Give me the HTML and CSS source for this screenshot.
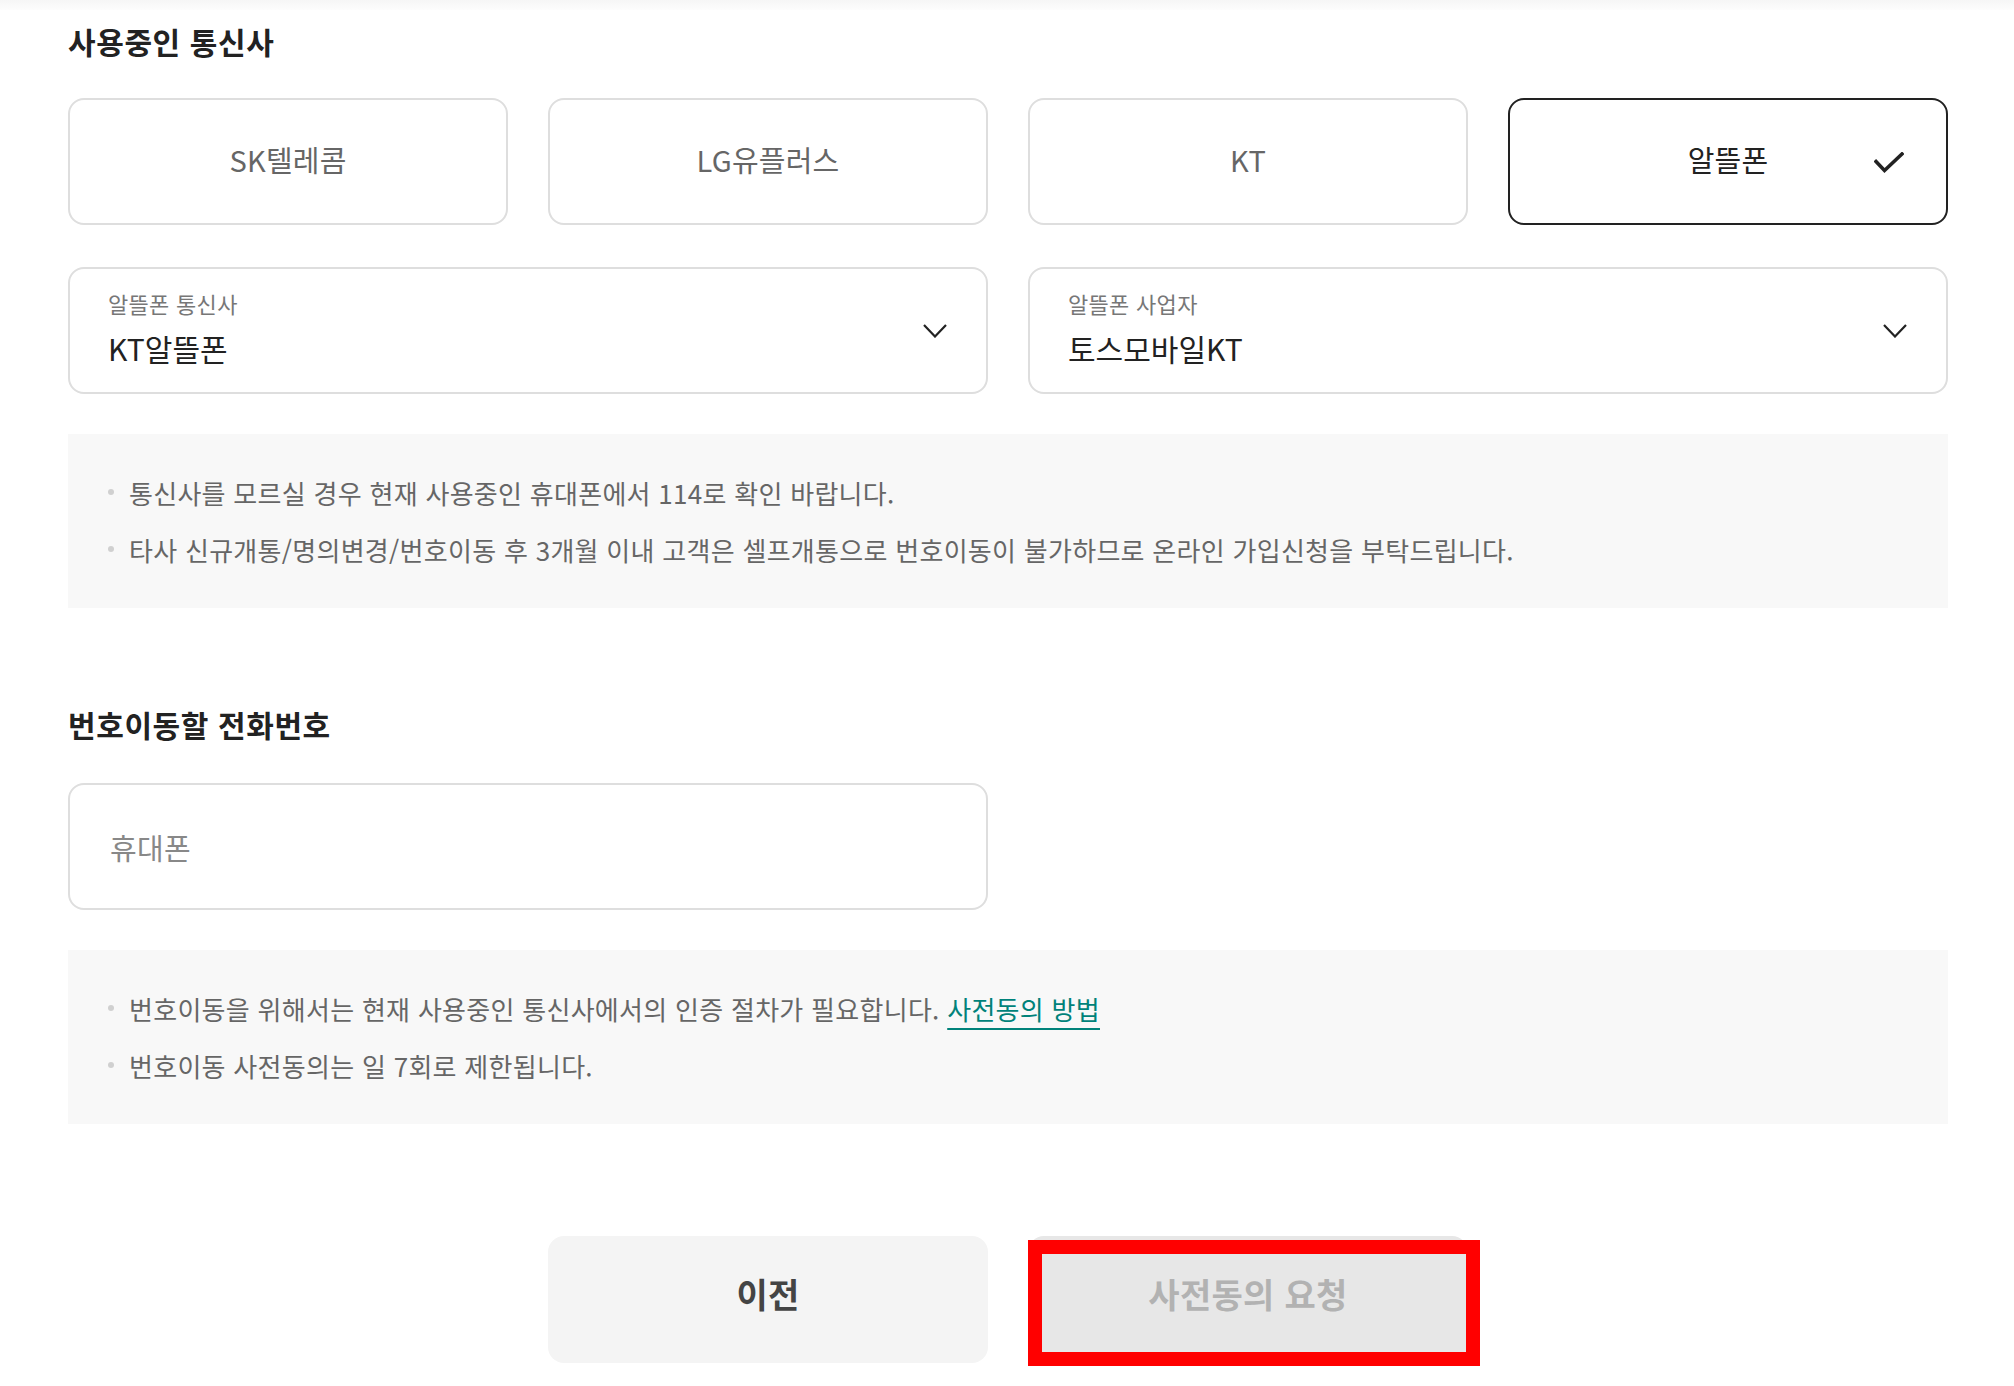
FILE: index.html
```html
<!DOCTYPE html>
<html lang="ko">
<head>
<meta charset="utf-8">
<title>번호이동</title>
<link rel="stylesheet" href="styles.css">
</head>
<body>
<div class="top-shade"></div>
<main class="page">
  <h2 class="section-title">사용중인 통신사</h2>
  <div class="carriers">
    <button class="carrier">SK텔레콤</button>
    <button class="carrier">LG유플러스</button>
    <button class="carrier">KT</button>
    <button class="carrier selected">알뜰폰
      <svg class="check" width="30" height="22" viewBox="0 0 30 22"><polyline points="2,9.5 10.5,18.5 28,2" fill="none" stroke="#222" stroke-width="3.6" stroke-linecap="square" stroke-linejoin="miter"/></svg>
    </button>
  </div>
  <div class="selects">
    <div class="select">
      <div class="select-text">
        <div class="select-label">알뜰폰 통신사</div>
        <div class="select-value">KT알뜰폰</div>
      </div>
      <svg class="chevron" width="24" height="14" viewBox="0 0 24 14"><polyline points="1,1 12,12.5 23,1" fill="none" stroke="#222" stroke-width="2.2"/></svg>
    </div>
    <div class="select">
      <div class="select-text">
        <div class="select-label">알뜰폰 사업자</div>
        <div class="select-value">토스모바일KT</div>
      </div>
      <svg class="chevron" width="24" height="14" viewBox="0 0 24 14"><polyline points="1,1 12,12.5 23,1" fill="none" stroke="#222" stroke-width="2.2"/></svg>
    </div>
  </div>
  <ul class="notice">
    <li>통신사를 모르실 경우 현재 사용중인 휴대폰에서 114로 확인 바랍니다.</li>
    <li>타사 신규개통/명의변경/번호이동 후 3개월 이내 고객은 셀프개통으로 번호이동이 불가하므로 온라인 가입신청을 부탁드립니다.</li>
  </ul>

  <h2 class="section-title second">번호이동할 전화번호</h2>
  <div class="phone-row">
    <input class="phone" type="text" placeholder="휴대폰">
  </div>
  <ul class="notice">
    <li>번호이동을 위해서는 현재 사용중인 통신사에서의 인증 절차가 필요합니다. <a class="link" href="#">사전동의 방법</a></li>
    <li>번호이동 사전동의는 일 7회로 제한됩니다.</li>
  </ul>

  <div class="actions">
    <button class="btn prev">이전</button>
    <button class="btn submit" disabled>사전동의 요청<span class="highlight"></span></button>
  </div>
</main>
</body>
</html>
```

FILE: styles.css
```css
* { box-sizing: border-box; }
html, body {
  margin: 0;
  padding: 0;
  background: #fff;
}
body {
  font-family: "Noto Sans CJK KR", "Noto Sans", sans-serif;
  color: #222;
  letter-spacing: 0;
}
.top-shade {
  height: 10px;
  background: linear-gradient(#f6f6f6, #fdfdfd);
}
.page {
  width: 1880px;
  margin-left: 68px;
  padding-bottom: 20px;
}
.section-title {
  margin: 9px 0 0;
  font-size: 30px;
  line-height: 44px;
  font-weight: 700;
  letter-spacing: 0.6px;
  color: #222;
}
.section-title.second {
  margin-top: 94px;
}
.carriers {
  margin-top: 35px;
  display: grid;
  grid-template-columns: repeat(4, 1fr);
  gap: 40px;
}
.carrier {
  position: relative;
  height: 127px;
  border: 2px solid #dedede;
  border-radius: 16px;
  background: #fff;
  font-family: inherit;
  letter-spacing: 0.2px;
  font-size: 29px;
  color: #666;
  display: flex;
  align-items: center;
  justify-content: center;
  padding: 0 0 6px;
}
.carrier.selected {
  border-color: #222;
  color: #222;
}
.check {
  position: absolute;
  right: 42px;
  top: 52px;
}
.selects {
  margin-top: 42px;
  display: grid;
  grid-template-columns: 1fr 1fr;
  gap: 40px;
}
.select {
  height: 127px;
  border: 2px solid #dedede;
  border-radius: 16px;
  display: flex;
  align-items: center;
  justify-content: space-between;
  padding: 0 39px 0 38px;
}
.select-text {
  display: flex;
  flex-direction: column;
  gap: 10px;
  margin-bottom: 5px;
}
.select-label {
  font-size: 22px;
  line-height: 30px;
  letter-spacing: 0.3px;
  color: #777;
}
.select-value {
  font-size: 30px;
  line-height: 40px;
  color: #222;
}
.notice {
  list-style: none;
  margin: 40px 0 0;
  padding: 30px 40px;
  background: #f8f8f8;
}
.notice li {
  position: relative;
  padding-left: 21px;
  font-size: 26px;
  line-height: 57px;
  letter-spacing: 0.28px;
  color: #666;
}
.notice li::before {
  content: "";
  position: absolute;
  left: 0;
  top: 25px;
  width: 6px;
  height: 6px;
  border-radius: 50%;
  background: #d0d0d0;
}
.link {
  color: #00827a;
  text-decoration: underline;
  text-decoration-thickness: 2px;
  text-underline-offset: 8px;
}
.phone-row {
  margin-top: 37px;
  display: grid;
  grid-template-columns: 1fr 1fr;
  gap: 40px;
}
.phone {
  height: 127px;
  border: 2px solid #dedede;
  border-radius: 16px;
  padding: 0 40px;
  font-family: inherit;
  letter-spacing: 0.3px;
  font-size: 29px;
  color: #222;
  outline: none;
}
.phone::placeholder {
  color: #888;
}
.actions {
  margin-top: 112px;
  display: flex;
  justify-content: center;
  gap: 40px;
}
.btn {
  position: relative;
  width: 440px;
  height: 127px;
  border: 0;
  border-radius: 16px;
  font-family: inherit;
  letter-spacing: 0.3px;
  font-size: 34px;
  font-weight: 700;
  padding: 0 0 12px;
}
.btn.prev {
  background: #f4f4f4;
  color: #444;
}
.btn.submit {
  background: #e7e7e7;
  color: #b2b2b2;
}
.highlight {
  position: absolute;
  left: 0;
  top: 4px;
  width: 452px;
  height: 126px;
  border: 14px solid #ff0000;
}
```
